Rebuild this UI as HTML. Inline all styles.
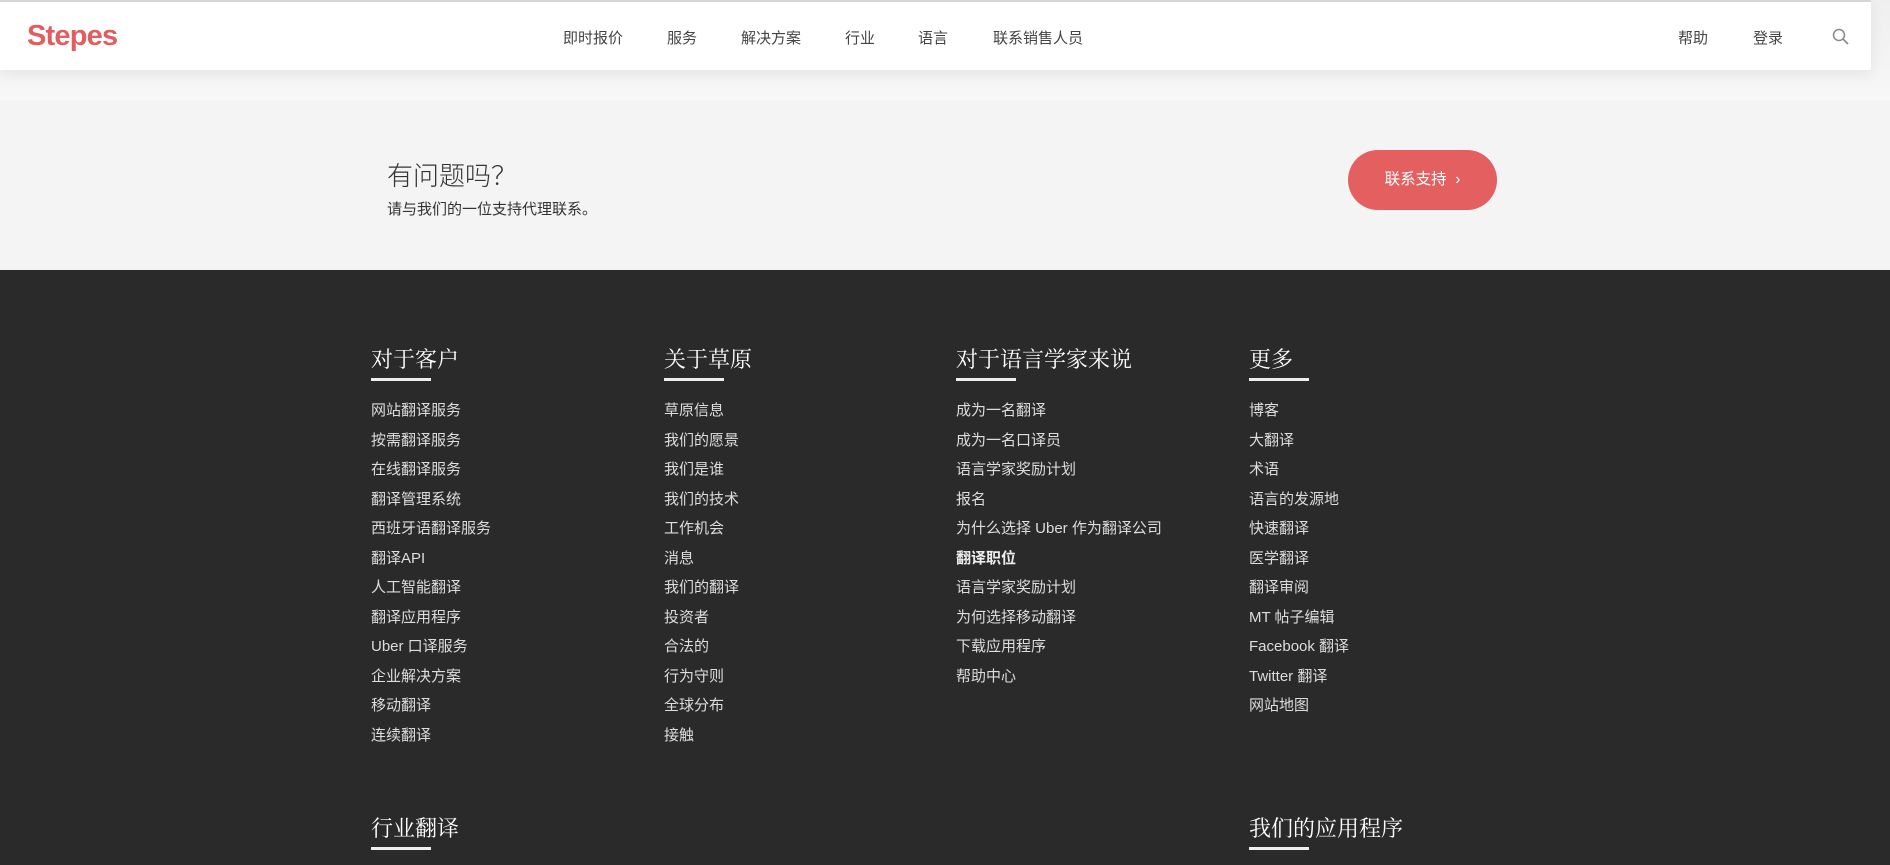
<!DOCTYPE html>
<html><head><meta charset="utf-8"><style>
*{margin:0;padding:0;box-sizing:border-box}
body{width:1890px;height:851px;overflow:hidden;background:#2a2a2a;font-family:"Liberation Sans","Noto Sans CJK SC",sans-serif;position:relative}
.top{position:absolute;left:0;top:0;width:1890px;height:100px;background:linear-gradient(#efefef,#f7f7f7)}
.hdr{position:absolute;left:0;top:0;width:1871px;height:70px;background:#fff;border-top:2px solid #d6d6d6;box-shadow:0 4px 14px rgba(0,0,0,.07)}
.logo{position:absolute;left:27px;top:18px;font-size:29px;font-weight:bold;color:#e25d5f;letter-spacing:-0.8px}
.nav{position:absolute;top:25px;font-size:15px;color:#444}
.gray{position:absolute;left:0;top:100px;width:1890px;height:170px;background:#f4f4f4}
.q{position:absolute;left:387px;top:156px;font-size:26px;color:#333;font-family:"Noto Sans CJK SC",sans-serif;font-weight:300}
.qs{position:absolute;left:387px;top:198px;font-size:15px;color:#333}
.btn{position:absolute;left:1348px;top:150px;width:149px;height:60px;border-radius:30px;background:#e35f60;color:#fff;font-size:15.5px;line-height:60px;text-align:center}
.col{position:absolute;top:343px}
.col h3{font-family:"Liberation Serif","Noto Serif CJK SC",serif;font-weight:normal;font-size:22px;color:#fff;height:35px}
.col .u{width:60px;height:3px;background:#eee;margin-bottom:15px}
.col a{display:block;color:#ddd;font-size:15px;line-height:29.5px;text-decoration:none}
.col b{display:block;color:#eee;font-size:15px;line-height:29.5px}
</style></head><body>
<div class="top"></div>
<div class="hdr">
<div class="logo">Stepes</div>
<div class="nav" style="left:563px">即时报价</div>
<div class="nav" style="left:667px">服务</div>
<div class="nav" style="left:741px">解决方案</div>
<div class="nav" style="left:845px">行业</div>
<div class="nav" style="left:918px">语言</div>
<div class="nav" style="left:993px">联系销售人员</div>
<div class="nav" style="left:1678px">帮助</div>
<div class="nav" style="left:1753px">登录</div>
<svg style="position:absolute;left:1832px;top:26px" width="18" height="18" viewBox="0 0 18 18"><circle cx="7" cy="7" r="5.5" fill="none" stroke="#888" stroke-width="1.5"/><line x1="11" y1="11" x2="16" y2="16" stroke="#888" stroke-width="1.6"/></svg>
</div>
<div class="gray">
</div>
<div class="q">有问题吗？</div>
<div class="qs">请与我们的一位支持代理联系。</div>
<div class="btn">联系支持 &nbsp;›</div>
<div class="col" style="left:371px"><h3>对于客户</h3><div class="u"></div>
<a>网站翻译服务</a><a>按需翻译服务</a><a>在线翻译服务</a><a>翻译管理系统</a><a>西班牙语翻译服务</a><a>翻译API</a><a>人工智能翻译</a><a>翻译应用程序</a><a>Uber 口译服务</a><a>企业解决方案</a><a>移动翻译</a><a>连续翻译</a></div>
<div class="col" style="left:664px"><h3>关于草原</h3><div class="u"></div>
<a>草原信息</a><a>我们的愿景</a><a>我们是谁</a><a>我们的技术</a><a>工作机会</a><a>消息</a><a>我们的翻译</a><a>投资者</a><a>合法的</a><a>行为守则</a><a>全球分布</a><a>接触</a></div>
<div class="col" style="left:956px"><h3>对于语言学家来说</h3><div class="u"></div>
<a>成为一名翻译</a><a>成为一名口译员</a><a>语言学家奖励计划</a><a>报名</a><a>为什么选择 Uber 作为翻译公司</a><b>翻译职位</b><a>语言学家奖励计划</a><a>为何选择移动翻译</a><a>下载应用程序</a><a>帮助中心</a></div>
<div class="col" style="left:1249px"><h3>更多</h3><div class="u"></div>
<a>博客</a><a>大翻译</a><a>术语</a><a>语言的发源地</a><a>快速翻译</a><a>医学翻译</a><a>翻译审阅</a><a>MT 帖子编辑</a><a>Facebook 翻译</a><a>Twitter 翻译</a><a>网站地图</a></div>
<div class="col" style="left:371px;top:812px"><h3>行业翻译</h3><div class="u"></div></div>
<div class="col" style="left:1249px;top:812px"><h3>我们的应用程序</h3><div class="u"></div></div>
</body></html>
